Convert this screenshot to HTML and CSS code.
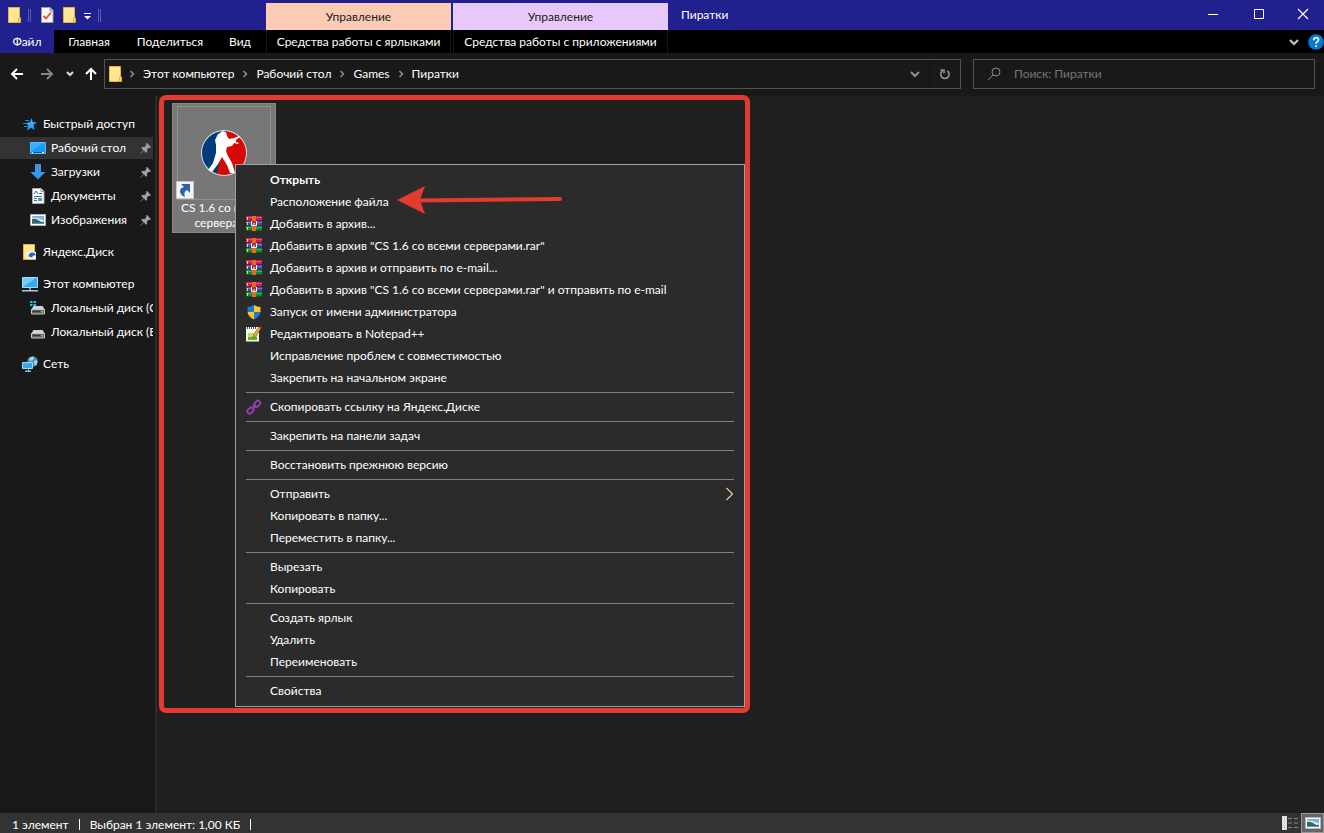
FILE: index.html
```html
<!DOCTYPE html>
<html lang="ru">
<head>
<meta charset="utf-8">
<title>Пиратки</title>
<link rel="stylesheet" href="styles.css">
</head>
<body>
<svg class="defs" aria-hidden="true">
  <symbol id="folder" viewBox="0 0 16 16">
    <path d="M1.500 0.500h11v10.500h1v4.500h-12z" fill="#ffe28a" stroke="#e2b635"/>
    <path d="M11.500 14.500v-3.500h2v4h-2z" fill="#ffd767" stroke="#e2b635"/>
    <path d="M2 1h10v9h-1v5H2z" fill="#ffe596"/>
  </symbol>
  <symbol id="crumb" viewBox="0 0 8 16"><path d="M2.500 5l3 3-3 3" fill="none" stroke="#8e8e8e" stroke-width="1.500"/></symbol>
  <symbol id="down" viewBox="0 0 16 16"><path d="M4 6l4 4 4-4" fill="none" stroke="currentColor" stroke-width="2"/></symbol>
  <symbol id="pin" viewBox="1 1 14 14">
    <path d="M9 2l5 5-1.500 1-1-.5-2.500 2.500.5 2.500-1.500 1-2.500-2.500L2 14.500l-.5-.5L5 10.500 2.500 8l1-1.500 2.500.5L8.500 4.500 8 3z" fill="#98a3ac"/>
  </symbol>
  <symbol id="rar" viewBox="0 0 16 16">
    <path d="M0 0h16v5H0z" fill="#c81f4e"/><path d="M0 1h16v1H0z" fill="#e64d76"/>
    <path d="M0 5h16v5H0z" fill="#4348a8"/><path d="M0 6h16v1H0z" fill="#7478d0"/>
    <path d="M0 10h16v5H0z" fill="#118a38"/><path d="M0 11h16v1H0z" fill="#35b55b"/>
    <path d="M0 4h16v1H0z" fill="#7c1838"/><path d="M0 9h16v1H0z" fill="#2c2f78"/><path d="M0 14h16v1H0z" fill="#0b5c28"/>
    <path d="M1 1h1v3H1zM1 6h1v3H1zM1 11h1v3H1z" fill="#f5d83d"/>
    <path d="M6 0h4v15H6z" fill="#e56b24"/>
    <path d="M5 5h6v5H5z" fill="#a63430"/><path d="M5.500 5v4.500h5V5" fill="none" stroke="#fff" stroke-width="1"/><path d="M7.500 7h1v3h-1z" fill="#fff"/>
  </symbol>
  <symbol id="drive" viewBox="0 0 16 16">
    <path d="M3.500 6h9l2.500 4H1z" fill="#d2d2d2"/><path d="M1.500 9.500h13V14h-13z" fill="#5d5f61" stroke="#c7c7c7"/>
    <path d="M3 11.500h7" stroke="#36383a"/><path d="M11 11h2v1.500h-2z" fill="#51e35a"/>
  </symbol>
  <symbol id="screen" viewBox="0 0 16 16">
    <path d="M.5 1.500h15v10H.5z" fill="#35aaf0" stroke="#a9daf4"/><path d="M1 11V2h13z" fill="#72ccff"/>
    <path d="M7 12h2v2H7z" fill="#87939b"/><path d="M0 14h16v1.500H0z" fill="#b4c5ce"/>
  </symbol>
  <symbol id="photo" viewBox="0 0 16 16">
    <path d="M.5 2.500h15v11H.5z" fill="#fff" stroke="#b6b6b6"/><path d="M2 4h12v8H2z" fill="#76b4e4"/>
    <path d="M2 5.500q6 0 12 3V12H2z" fill="#e1eef5"/><path d="M2 7q4-1 7 1.500t5 1V12H2z" fill="#3c6560"/><path d="M2 11h12v1H2z" fill="#5291b5"/>
  </symbol>
</svg>

<div class="window">
  <header class="titlebar">
    <div class="quick">
      <svg class="i16"><use href="#folder"/></svg>
      <span class="grip"></span>
      <button class="quick-check" aria-label="Свойства папки"><svg class="i16" viewBox="0 0 16 16"><path d="M2.500.5h8.500l3 3v12H2.500z" fill="#f8f8f8" stroke="#9d9d9d"/><path d="M11 0.500V4h3.500" fill="#ccc" stroke="#999"/><path d="M4.500 9l2.500 2.500 5-6" fill="none" stroke="#e9511f" stroke-width="1.800"/></svg></button>
      <button aria-label="Новая папка"><svg class="i16"><use href="#folder"/></svg></button>
      <button class="quick-more" aria-label="Настройка панели"><svg class="i16" viewBox="0 0 16 16"><path d="M4 6.500h7" stroke="#fff"/><path d="M4 9h7L7.500 12.500z" fill="#fff"/></svg></button>
      <span class="grip last"></span>
    </div>
    <div class="group group-peach">Управление</div>
    <div class="group group-lilac">Управление</div>
    <h1 class="caption">Пиратки</h1>
    <div class="controls">
      <button aria-label="Свернуть"><svg class="i16" viewBox="0 0 16 16"><path d="M3 8.500h10" stroke="#fff"/></svg></button>
      <button aria-label="Развернуть"><svg class="i16" viewBox="0 0 16 16"><path d="M3.500 3.500h9v9h-9z" fill="none" stroke="#fff"/></svg></button>
      <button aria-label="Закрыть"><svg class="i16" viewBox="0 0 16 16"><path d="M3 3l10 10M13 3L3 13" stroke="#fff" stroke-width="1.200"/></svg></button>
    </div>
  </header>

  <nav class="ribbon" aria-label="Лента">
    <button class="tab tab-file">Файл</button>
    <button class="tab tab-home">Главная</button>
    <button class="tab tab-share">Поделиться</button>
    <button class="tab tab-view">Вид</button>
    <button class="tab tab-links">Средства работы с ярлыками</button>
    <button class="tab tab-apps">Средства работы с приложениями</button>
    <div class="ribbon-end">
      <button aria-label="Развернуть ленту"><svg class="i16"><use href="#down"/></svg></button>
      <button aria-label="Справка"><svg class="i16" viewBox="0 0 16 16"><circle cx="8" cy="8" r="7.800" fill="#0878d4"/><path d="M5.700 6.200Q5.700 3.700 8.100 3.700t2.400 2.100Q10.500 7 9.200 7.700T8 9.800M8 11.300v1.700" fill="none" stroke="#fff" stroke-width="1.700"/></svg></button>
    </div>
  </nav>

  <div class="navbar">
    <div class="arrows">
      <button aria-label="Назад"><svg class="i16" viewBox="0 0 16 16"><path d="M14 8H3M8 3L3 8l5 5" fill="none" stroke="#fff" stroke-width="2"/></svg></button>
      <button class="forward" aria-label="Вперёд"><svg class="i16" viewBox="0 0 16 16"><path d="M2 8h11M8 3l5 5-5 5" fill="none" stroke="#858585" stroke-width="2"/></svg></button>
      <button class="recent" aria-label="Последние"><svg class="i12" viewBox="0 0 12 12"><path d="M3 4l3 3 3-3" fill="none" stroke="#ddd" stroke-width="2"/></svg></button>
      <button aria-label="Вверх"><svg class="i16" viewBox="0 0 16 16"><path d="M8 14V3M3 8l5-5 5 5" fill="none" stroke="#fff" stroke-width="2"/></svg></button>
    </div>
    <div class="address">
      <svg class="i16"><use href="#folder"/></svg>
      <svg class="sep"><use href="#crumb"/></svg><button>Этот компьютер</button>
      <svg class="sep"><use href="#crumb"/></svg><button>Рабочий стол</button>
      <svg class="sep"><use href="#crumb"/></svg><button>Games</button>
      <svg class="sep"><use href="#crumb"/></svg><button>Пиратки</button>
      <div class="address-end">
        <button class="history" aria-label="Предыдущие расположения"><svg class="i16"><use href="#down"/></svg></button>
        <button class="refresh" aria-label="Обновить"><svg class="i16" viewBox="0 0 16 16"><path d="M10.500 5A4.200 4.200 0 1 1 5.300 5M3.500 4h3.500v3.500" fill="none" stroke="#929292" stroke-width="1.600"/></svg></button>
      </div>
    </div>
    <label class="search">
      <svg class="i16" viewBox="0 0 16 16"><circle cx="10" cy="6" r="4" fill="none" stroke="#8a8a8a"/><path d="M7 9l-5 5" stroke="#8a8a8a"/></svg>
      <input type="text" placeholder="Поиск: Пиратки" aria-label="Поиск">
    </label>
  </div>

  <div class="work">
    <nav class="side" aria-label="Папки">
      <a href="#" class="top"><svg class="i16" viewBox="0 0 16 16"><path d="M9.500 2l1.300 4 4.200.5-3.500 2.500 1 5-3.500-2.500-4 3L6.500 10 4 7l4-1z" fill="#35a8f2"/><path d="M3 4.500h4M1 7.500h4M2 10.500h4" stroke="#2489cc"/></svg>Быстрый доступ</a>
      <a href="#" class="sub current"><svg class="i16" viewBox="0 0 16 16"><path d="M.5 2.500h15v11H.5z" fill="#159bf5" stroke="#58bfff"/><path d="M1 11.500L14 3H1z" fill="#37adff"/><path d="M1 12.500h14" stroke="#125b92"/><path d="M2 12.500h1m9 0h2" stroke="#fff"/></svg><span>Рабочий стол</span><svg class="i12"><use href="#pin"/></svg></a>
      <a href="#" class="sub"><svg class="i16" viewBox="0 0 16 16"><path d="M5 0h6v8h4.500L8 15.500.5 8H5z" fill="#3797e8"/></svg><span>Загрузки</span><svg class="i12"><use href="#pin"/></svg></a>
      <a href="#" class="sub"><svg class="i16" viewBox="0 0 16 16"><path d="M2.500.5H11l3 3v12H2.500z" fill="#fff" stroke="#aaa"/><path d="M11 .5v3h3" fill="#ddd" stroke="#999"/><path d="M4 6l2-3 2 3M9 5.500h3M4 8.500h8M4 10.500h3M4 12.500h3" fill="none" stroke="#2478b4"/><path d="M8 10h4v3H8z" fill="#658f9f"/></svg><span>Документы</span><svg class="i12"><use href="#pin"/></svg></a>
      <a href="#" class="sub"><svg class="i16"><use href="#photo"/></svg><span>Изображения</span><svg class="i12"><use href="#pin"/></svg></a>
      <a href="#" class="top spaced"><svg class="i16" viewBox="0 0 16 16"><use href="#folder"/><path d="M5.500 8H14v7H5.500z" fill="#f4f5f6"/><path d="M6.500 12.500q0-4 4-4 2.500 0 3.500 3-3-1-4 2z" fill="#1d66cc"/></svg>Яндекс.Диск</a>
      <a href="#" class="top spaced"><svg class="i16"><use href="#screen"/></svg>Этот компьютер</a>
      <a href="#" class="sub drive"><svg class="i16" viewBox="0 0 16 16"><use href="#drive"/><path d="M0 1h2.500v2H0zM3.500 1H6v2H3.500zM0 4h2.500v2H0zM3.500 4H6v2H3.500z" fill="#21bce9"/></svg><span>Локальный диск (C:)</span></a>
      <a href="#" class="sub drive"><svg class="i16"><use href="#drive"/></svg><span>Локальный диск (E:)</span></a>
      <a href="#" class="top spaced"><svg class="i16" viewBox="0 0 16 16"><circle cx="10.500" cy="5.500" r="5.200" fill="#4b91ba"/><path d="M7 3q2-3 5-2l-1 3-3 1zM12 5l3-1q1 4-2 6z" fill="#a9d7e9"/><path d="M.5 6.500h10v6H.5z" fill="#39a9ec" stroke="#9cdcfb"/><path d="M5 13h1v1.500H3V16h6v-1.500H7V13" fill="#9eb5c2"/></svg>Сеть</a>
    </nav>

    <main class="pane">
      <button class="file">
        <span class="thumb">
          <svg class="logo" viewBox="0 0 48 48">
            <defs><clipPath id="disc"><circle cx="24" cy="24" r="22"/></clipPath></defs>
            <circle cx="24" cy="24" r="23" fill="#dedede"/>
            <g clip-path="url(#disc)"><path d="M0 0h28L18 48H0z" fill="#003b7c"/><path d="M27 0h21v48H16z" fill="#d50906"/></g>
            <path d="M20 4l2-2 4 1 1 4 2 3 5-1 5-2 1 1-4 3v2l3 1-1 1-4-1-2 3-5 1-1 4 2 5 4 7 3 10h-5l-3-8-5-8-4 7-6 8-4-2 5-7 3-10v-8l-1-5 3-6 2-1z" fill="#fff"/>
          </svg>
          <svg class="shortcut" viewBox="0 0 18 18"><path d="M.5.5h17v17H.5z" fill="#f3f3f3" stroke="#c8c8c8"/><path d="M5 3h9v9l-3-3q-4 2-2 7-5-2-5-6 0-3 4-4z" fill="#2d64a8"/></svg>
        </span>
        <span class="name">CS 1.6 со всеми серверами</span>
      </button>

      <div class="frame"></div>

      <div class="menu" role="menu">
        <button role="menuitem" class="default">Открыть</button>
        <button role="menuitem">Расположение файла</button>
        <button role="menuitem"><svg class="i16"><use href="#rar"/></svg>Добавить в архив...</button>
        <button role="menuitem"><svg class="i16"><use href="#rar"/></svg>Добавить в архив "CS 1.6 со всеми серверами.rar"</button>
        <button role="menuitem"><svg class="i16"><use href="#rar"/></svg>Добавить в архив и отправить по e-mail...</button>
        <button role="menuitem"><svg class="i16"><use href="#rar"/></svg>Добавить в архив "CS 1.6 со всеми серверами.rar" и отправить по e-mail</button>
        <button role="menuitem"><svg class="i16" viewBox="0 0 16 16"><path d="M8 1q-3 2-6.500 2v5H8z" fill="#1c7ecb"/><path d="M8 1q3 2 6.500 2v5H8z" fill="#fbc52d"/><path d="M1.500 8Q2 13 8 15.500V8z" fill="#fbc52d"/><path d="M14.500 8Q14 13 8 15.500V8z" fill="#1c7ecb"/></svg>Запуск от имени администратора</button>
        <button role="menuitem"><svg class="i16" viewBox="0 0 16 16"><path d="M0 1h13v14.500H0z" fill="#f5f6ed"/><path d="M2 7h9v7H2z" fill="#b6df63"/><path d="M2 11h9v3H2z" fill="#69ad29"/><path d="M1.500 1v2m2-2v2m2-2v2m2-2v2m2-2v2" stroke="#555"/><path d="M7 12l1-4 5-7 2 1-5 8z" fill="#f3b13a" stroke="#805315" stroke-width=".7"/><path d="M13 1l1-1 2 1-1 2z" fill="#bd2928"/></svg>Редактировать в Notepad++</button>
        <button role="menuitem">Исправление проблем с совместимостью</button>
        <button role="menuitem">Закрепить на начальном экране</button>
        <hr>
        <button role="menuitem"><svg class="i16" viewBox="0 0 16 16"><g fill="none" stroke="#9b3db5" stroke-width="1.800"><rect x="-3.500" y="-2.300" width="7" height="4.600" rx="2.300" transform="translate(4.500 11.500) rotate(-45)"/><rect x="-3.500" y="-2.300" width="7" height="4.600" rx="2.300" transform="translate(11.200 4.800) rotate(-45)"/><path d="M6 10l4-4"/></g></svg>Скопировать ссылку на Яндекс.Диске</button>
        <hr>
        <button role="menuitem">Закрепить на панели задач</button>
        <hr>
        <button role="menuitem">Восстановить прежнюю версию</button>
        <hr>
        <button role="menuitem">Отправить<svg class="more" viewBox="0 0 8 14"><path d="M.5 1l6 6-6 6" fill="none" stroke="#f0c9a0" stroke-width="1.200"/></svg></button>
        <button role="menuitem">Копировать в папку...</button>
        <button role="menuitem">Переместить в папку...</button>
        <hr>
        <button role="menuitem">Вырезать</button>
        <button role="menuitem">Копировать</button>
        <hr>
        <button role="menuitem">Создать ярлык</button>
        <button role="menuitem">Удалить</button>
        <button role="menuitem">Переименовать</button>
        <hr>
        <button role="menuitem">Свойства</button>
      </div>

      <svg class="pointer" viewBox="0 0 166 28"><path d="M20 14.500L163 13" stroke="#e43b30" stroke-width="4" stroke-linecap="round"/><path d="M0 14L28 0 23 14l5 14z" fill="#e43b30"/></svg>
    </main>
  </div>

  <footer class="status">
    <span class="cell">1 элемент</span>
    <span class="cell">Выбран 1 элемент: 1,00 КБ</span>
    <div class="views">
      <button aria-label="Таблица"><svg class="wide" viewBox="0 0 18 14"><path d="M1 0h5v14H1z" fill="#ddd"/><path d="M2 1.500h3v2H2zM2 6h3v2H2zM2 10.500h3v2H2z" fill="#fff"/><path d="M3 2h1v1H3z" fill="#278048"/><path d="M3 6.500h1v1H3z" fill="#277bd1"/><path d="M3 11h1v1H3z" fill="#d22"/><path d="M7 2.500h4m2 0h4M7 7h4m2 0h4M7 11.500h4m2 0h4" stroke="#888"/></svg></button>
      <button class="active" aria-label="Крупные значки"><svg class="i16"><use href="#photo"/></svg></button>
    </div>
  </footer>
</div>
</body>
</html>
```

FILE: styles.css
```css
* { box-sizing: border-box; }
body {
  margin: 0;
  background: #202020;
  color: #fff;
  font: 12px/16px Lato, "Noto Sans", sans-serif;
}
button {
  margin: 0;
  padding: 0;
  border: 0;
  background: none;
  color: inherit;
  font: inherit;
  white-space: nowrap;
}
a { color: inherit; text-decoration: none; }
svg { display: block; flex: none; }
.defs { position: absolute; width: 0; height: 0; }
.i16 { width: 16px; height: 16px; }
.i12 { width: 12px; height: 12px; }

.window { display: flex; flex-direction: column; min-height: 100vh; overflow: hidden; }

.titlebar { display: flex; align-items: stretch; height: 30px; background: #20208f; }
.quick { display: flex; align-items: center; width: 266px; padding-left: 7px; }
.grip { width: 3px; height: 13px; margin-left: 5px; border: solid #5b5ba5; border-width: 0 1px; }
.quick-check { margin-left: 8px; }
.quick-check + button { margin-left: 7px; }
.quick-more { margin-left: 2px; }
.grip.last { margin-left: 2px; }
.group {
  margin: 3px 2px 0 0;
  color: #1c1c1c;
  line-height: 28px;
  text-align: center;
}
.group-peach { width: 185px; background: #fbcbb3; }
.group-lilac { width: 215px; margin-right: 0; background: #e8c8fb; }
.caption { margin: 0; padding-left: 13px; font-size: 12px; font-weight: 400; line-height: 30px; }
.controls { display: flex; margin-left: auto; }
.controls button { display: grid; place-items: center; width: 46px; height: 28px; }
.controls button:last-child { width: 42px; }

.ribbon { display: flex; height: 23px; background: #000; }
.tab { height: 23px; }
.tab-file { width: 54px; background: #20208f; }
.tab-home { width: 70px; }
.tab-share { width: 92px; }
.tab-view { width: 48px; }
.tab-links { width: 185px; margin: 0 2px; border: solid #161616; border-width: 0 1px; }
.tab-apps { width: 215px; border: solid #161616; border-width: 0 1px; }
.ribbon-end { display: flex; align-items: center; gap: 6px; margin-left: auto; color: #c8c8c8; }

.navbar { display: flex; align-items: center; height: 43px; padding: 0 9px 1px 0; background: #191919; }
.arrows { display: flex; align-items: center; width: 104px; padding-left: 9px; }
.forward { margin-left: 14px; }
.recent { margin: 0 7px 0 9px; }
.address { display: flex; flex: 5 1 857px; align-items: center; height: 30px; padding-left: 3px; border: 1px solid #535353; }
.sep { width: 8px; height: 16px; margin: 0 7px; }
.address > .i16 + .sep { margin-left: 4px; }
.address-end { display: flex; height: 28px; margin-left: auto; color: #929292; }
.history { padding: 0 6px; }
.refresh { width: 31px; padding: 0 7px; border-left: 1px solid #111; }
.search { display: flex; flex: 2 1 342px; align-items: center; height: 30px; margin-left: 12px; padding-left: 12px; border: 1px solid #535353; }
.search input {
  flex: 1;
  min-width: 0;
  margin-left: 12px;
  padding: 0;
  border: 0;
  outline: 0;
  background: none;
  color: #fff;
  font: inherit;
}
.search input::placeholder { color: #777; opacity: 1; }

.work { display: flex; flex: 1; }
.side { width: 157px; padding: 17px 2px 0 0; border-right: 2px solid #2b2b2b; background: #191919; }
.side a { display: flex; align-items: center; height: 22px; margin-bottom: 2px; overflow: hidden; white-space: nowrap; }
.side .top { gap: 5px; padding-left: 22px; }
.side .sub { gap: 5px; padding-left: 30px; }
.side .sub span { flex: 1; }
.side .sub .i12 { margin-right: 1px; }
.side .spaced { margin-top: 10px; }
.side .current { background: #333; }

.pane { position: relative; flex: 1; padding: 7px 0 0 15px; }
.file { display: block; width: 104px; padding: 2px 4px; border: 1px solid #888; background: #777; white-space: normal; }
.thumb { display: grid; position: relative; place-items: center; height: 94px; border: 1px solid #929292; }
.logo { width: 48px; height: 48px; }
.shortcut { position: absolute; bottom: 0; left: -2px; width: 18px; height: 18px; }
.name { display: block; line-height: 15px; }

.frame { position: absolute; top: -1px; left: 2px; width: 591px; height: 618px; border: 5px solid #e43b30; border-radius: 7px; }
.menu { position: absolute; top: 68px; left: 78px; width: 510px; padding: 4px 0; border: 1px solid #a0a0a0; background: #2b2b2b; }
.menu button { display: flex; align-items: center; width: 100%; height: 22px; padding: 0 10px 0 34px; }
.menu .i16 { margin: 0 8px 0 -24px; }
.menu .default { font-weight: 700; }
.menu hr { height: 1px; margin: 3px 10px; border: 0; background: #808080; }
.more { width: 8px; height: 14px; margin-left: auto; }
.pointer { position: absolute; top: 90px; left: 240px; width: 166px; height: 28px; }

.status { display: flex; align-items: center; height: 20px; padding-left: 12px; background: #333; }
.cell { display: flex; align-items: center; padding-top: 3px; }
.cell::after { content: ""; width: 1px; height: 11px; margin: 0 10px; background: #fff; }
.views { display: flex; align-items: center; height: 20px; margin-left: auto; }
.views button { display: grid; place-items: center; width: 23px; height: 20px; }
.views .wide { width: 18px; height: 14px; }
.views .active { border: 1px solid #999; background: #666; }
```
